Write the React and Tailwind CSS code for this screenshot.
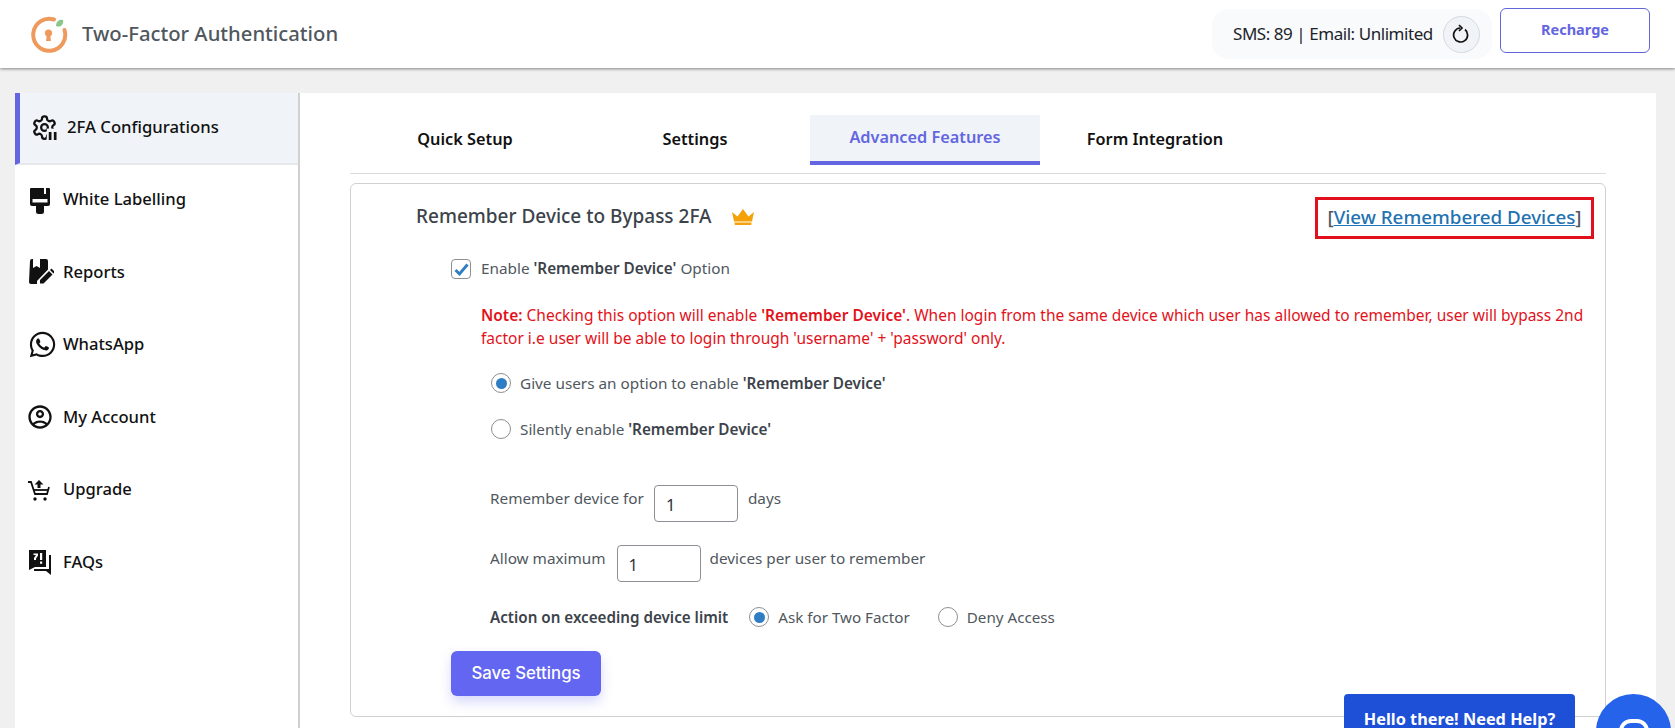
import { FaWhatsapp } from 'react-icons/fa';
import { MdOutlineAccountCircle } from 'react-icons/md';

const font = 'font-["Noto_Sans",sans-serif]';

function LogoIcon() {
    return (
        <svg width="38" height="38" viewBox="0 0 38 38" fill="none">
            <path d="M24 4.500A16 16 0 1 0 34.500 15" stroke="#ee9a5c" strokeWidth="4" strokeLinecap="round" />
            <circle cx="18.500" cy="18" r="3.600" fill="#ee9a5c" />
            <path d="M17 19h3l1 7h-5z" fill="#ee9a5c" />
            <path d="M26 11c0-4 3-7 7-6 1 4-2 8-7 6z" fill="#8cc68a" />
        </svg>
    );
}

function GearIcon() {
    return (
        <svg width="27" height="27" viewBox="0 0 24 24" fill="none" stroke="#111" strokeWidth="2">
            <path d="M12.220 2h-.44a2 2 0 0 0-2 2v.18a2 2 0 0 1-1 1.730l-.43.25a2 2 0 0 1-2 0l-.15-.08a2 2 0 0 0-2.730.73l-.22.38a2 2 0 0 0 .73 2.730l.15.1a2 2 0 0 1 1 1.720v.51a2 2 0 0 1-1 1.740l-.15.09a2 2 0 0 0-.73 2.730l.22.38a2 2 0 0 0 2.730.73l.15-.08a2 2 0 0 1 2 0l.43.25a2 2 0 0 1 1 1.730V20a2 2 0 0 0 2 2h.44a2 2 0 0 0 2-2v-.18a2 2 0 0 1 1-1.730l.43-.25a2 2 0 0 1 2 0l.15.08a2 2 0 0 0 2.730-.73l.22-.39a2 2 0 0 0-.73-2.730l-.15-.08a2 2 0 0 1-1-1.740v-.5a2 2 0 0 1 1-1.740l.15-.09a2 2 0 0 0 .73-2.730l-.22-.38a2 2 0 0 0-2.730-.73l-.15.08a2 2 0 0 1-2 0l-.43-.25a2 2 0 0 1-1-1.730V4a2 2 0 0 0-2-2z" />
            <circle cx="12" cy="12" r="3" />
            <rect x="14" y="13" width="10" height="11" fill="#f0f4f9" stroke="none" />
            <path d="M17 16v7M21.500 16v7" strokeWidth="2.400" />
        </svg>
    );
}

function BrushIcon() {
    return (
        <svg width="24" height="28" viewBox="0 0 24 28" fill="#111">
            <path d="M3 2h13v6h2V2h3a1 1 0 0 1 1 1v15a2 2 0 0 1-2 2h-4v5.500a2.500 2.500 0 0 1-2.500 2.500h-3A2.500 2.500 0 0 1 8 25.500V20H4a2 2 0 0 1-2-2V3a1 1 0 0 1 1-1zM4.500 13v3.500h15V13z" fillRule="evenodd" />
        </svg>
    );
}

function ReportIcon() {
    return (
        <svg width="26" height="26" viewBox="0 0 26 26" fill="#111">
            <path d="M2 2a2 2 0 0 1 2-2h1v9l3.500-2L12 9V0h6a2 2 0 0 1 2 2v8.500L9 22v3H3a2 2 0 0 1-2-2z" />
            <path d="M12 21l9-9 3.500 3.500-9 9H12zM22 11l1.500-1.500L27 13l-1.500 1.500z" />
        </svg>
    );
}

function CartIcon() {
    return (
        <svg width="24" height="24" viewBox="0 0 24 24" fill="none" stroke="#111" strokeWidth="1.800">
            <path d="M0 4h3l4 12h12l2-7" />
            <circle cx="7" cy="21" r="1.700" fill="#111" stroke="none" />
            <circle cx="17" cy="21" r="1.700" fill="#111" stroke="none" />
            <path d="M5 12h15" />
            <path d="M11 2l4.500 4.500h-3V10h-3V6.500h-3z" fill="#111" stroke="none" />
        </svg>
    );
}

function FaqIcon() {
    return (
        <svg width="24" height="25" viewBox="0 0 24 25" fill="#111">
            <path
                fillRule="evenodd"
                d="M1 0h17v17H7l-6 3zM5.500 3.500v1.500h2.500l-2 3v2h2V8.500l2-3V3.500zM12 3v7h2.200V3zM12 11.500v2.200h2.200v-2.200z"
            />
            <path d="M21 5h2v20l-5-4H6v-2h15z" />
        </svg>
    );
}

function CrownIcon() {
    return (
        <svg width="22" height="16" viewBox="0 0 22 16" fill="#f5a20a">
            <path d="M0 3l5.500 4.500L11 0l5.500 7.500L22 3l-2 9.500H2z" />
            <path d="M2.400 13.500h17.200l-.4 2.500H2.800z" />
        </svg>
    );
}

const navItems = [
    { label: 'White Labelling', icon: <BrushIcon /> },
    { label: 'Reports', icon: <ReportIcon /> },
    { label: 'WhatsApp', icon: <FaWhatsapp size={29} color="#111" /> },
    { label: 'My Account', icon: <span className="-ml-[2px]"><MdOutlineAccountCircle size={28} color="#111" /></span> },
    { label: 'Upgrade', icon: <CartIcon /> },
    { label: 'FAQs', icon: <FaqIcon /> },
];

const tabs = ['Quick Setup', 'Settings', 'Advanced Features', 'Form Integration'];

function Radio({ checked }) {
    return (
        <span className="flex h-5 w-5 shrink-0 items-center justify-center rounded-full border border-[#8c8f94] bg-white">
            {checked && <span className="h-[11px] w-[11px] rounded-full bg-[#2f7ec4]" />}
        </span>
    );
}

function NumberBox() {
    return (
        <div className="flex h-[37px] w-[84px] items-center rounded border border-[#8c8f94] bg-white pl-[11px] pt-[3px] text-[16.500px] text-[#2c3338]">
            1
        </div>
    );
}

export default function App() {
    return (
        <div className={`relative h-[728px] w-[1675px] overflow-hidden bg-[#f0f0f1] ${font}`}>
            {/* Header */}
            <header className="flex h-[68px] items-center justify-between bg-white pl-[30px] pr-[25px] shadow-[0_1px_3px_rgba(0,0,0,0.45)]">
                <div className="flex items-center gap-[14px]">
                    <LogoIcon />
                    <h1 className="pb-[2px] text-[20.250px] font-medium text-[#50575e]">Two-Factor Authentication</h1>
                </div>
                <div className="flex items-start gap-2">
                    <div className="flex h-[50px] w-[280px] items-center gap-[10px] rounded-2xl bg-[#f8fafc] pl-[21px]">
                        <span className="text-[17px] tracking-[-0.45px] text-[#1d2327]">SMS: 89 | Email: Unlimited</span>
                        <span className="flex h-[37px] w-[37px] items-center justify-center rounded-full border border-[#d5d9de] bg-[#f0f4f8]">
                            <svg width="18" height="20" viewBox="0 0 18 20" fill="none" stroke="#111" strokeWidth="1.700">
                                <path d="M13 5.500a7 7 0 1 1-5-1.500" />
                                <path d="M7 1l3 3-3 3" />
                            </svg>
                        </span>
                    </div>
                    <button className="-mt-[1px] h-[45px] w-[150px] rounded-md border border-[#6366d8] bg-white pb-[1px] text-[14.500px] font-bold text-[#6366e0]">
                        Recharge
                    </button>
                </div>
            </header>

            <div className="flex pl-[15px] pr-[19px] pt-[25px]">
                {/* Sidebar */}
                <aside className="h-[700px] w-[285px] shrink-0 border-r-2 border-[#d0d0d0] bg-white">
                    <div className="flex h-[72px] items-center gap-[9px] border-b-2 border-l-[5px] border-b-[#e6e8ec] border-l-[#6366e0] bg-[#f0f4f9] pb-[2px] pl-[11px]">
                        <GearIcon />
                        <span className="text-[16.700px] font-medium text-[#111]">2FA Configurations</span>
                    </div>
                    {navItems.map((item) => (
                        <div key={item.label} className="flex h-[72.500px] items-center pb-[3px] pl-[13px]">
                            <span className="flex w-[35px] shrink-0 justify-start">{item.icon}</span>
                            <span className="text-[16.600px] font-medium text-[#111]">{item.label}</span>
                        </div>
                    ))}
                </aside>

                {/* Main */}
                <main className="h-[700px] flex-1 bg-white px-[50px] pt-[22px]">
                    <div className="flex h-[59px] border-b border-[#dcdcde] pb-2">
                        {tabs.map((tab) => (
                            <div
                                key={tab}
                                className={`flex h-[50px] w-[230px] items-center justify-center pb-[2px] text-[16.300px] font-semibold ${
                                    tab === 'Advanced Features'
                                        ? 'border-b-4 border-[#6366e0] bg-[#f0f4f9] pb-0 text-[#6366e0]'
                                        : 'text-[#111]'
                                }`}
                            >
                                {tab}
                            </div>
                        ))}
                    </div>

                    {/* Card */}
                    <div className="mt-[9px] h-[534px] rounded-md border border-[#d0d0d0] pt-[13px] text-[15.300px] text-[#50575e]">
                        <div className="flex h-[42px] items-center justify-between pl-[65px] pr-[11px]">
                            <div className="flex items-center gap-[20px] pb-[3px]">
                                <h2 className="text-[19px] font-medium text-[#3c434a]">Remember Device to Bypass 2FA</h2>
                                <CrownIcon />
                            </div>
                            <div className="flex h-[42px] w-[279px] items-center justify-center border-[3px] border-[#e0101c] pb-[1px] text-[18.800px] font-medium text-[#50575e]">
                                [<a className="text-[#2271b1] underline">View Remembered Devices</a>]
                            </div>
                        </div>

                        <div className="mt-5 flex h-5 items-center pl-[100px]">
                            <span className="mr-[10px] flex h-5 w-5 items-center justify-center rounded border border-[#8c8f94]">
                                <svg width="15" height="13" viewBox="0 0 15 13" fill="none" stroke="#2f7ec4" strokeWidth="2.800">
                                    <path d="M1.500 7l4 4 8-9.500" />
                                </svg>
                            </span>
                            <span className="pb-[2px]">
                                Enable <b className="font-semibold text-[#3c434a]">'Remember Device'</b> Option
                            </span>
                        </div>

                        <p className="mt-[25px] pl-[130px] pr-5 text-[15.500px] leading-[23px] text-[#e2121b]">
                            <b className="font-semibold">Note:</b> Checking this option will enable{' '}
                            <b className="font-semibold">'Remember Device'</b>. When login from the same device which user has allowed to remember, user will bypass 2nd factor i.e user will be able to login through 'username' + 'password' only.
                        </p>

                        <div className="mt-[23px] flex h-5 items-center gap-[9px] pl-[140px]">
                            <Radio checked />
                            <span>
                                Give users an option to enable <b className="font-semibold text-[#3c434a]">'Remember Device'</b>
                            </span>
                        </div>
                        <div className="mt-[26px] flex h-5 items-center gap-[9px] pl-[140px]">
                            <Radio />
                            <span>
                                Silently enable <b className="font-semibold text-[#3c434a]">'Remember Device'</b>
                            </span>
                        </div>

                        <div className="mt-[46px] flex pl-[139px]">
                            <span className="mr-[10px] mt-[2px]">Remember device for</span>
                            <NumberBox />
                            <span className="ml-[10px] mt-[2px]">days</span>
                        </div>
                        <div className="mt-[23px] flex pl-[139px]">
                            <span className="mr-[11px] mt-[2px]">Allow maximum</span>
                            <NumberBox />
                            <span className="ml-[9px] mt-[2px]">devices per user to remember</span>
                        </div>

                        <div className="mt-[25px] flex h-5 items-center pl-[139px] text-[15.200px]">
                            <b className="mr-[21px] font-semibold text-[#3c434a]">Action on exceeding device limit</b>
                            <Radio checked />
                            <span className="ml-[9px] mr-7">Ask for Two Factor</span>
                            <Radio />
                            <span className="ml-[9px]">Deny Access</span>
                        </div>

                        <button className="ml-[100px] mt-[24px] h-[45px] w-[150px] rounded-md bg-[#6366f1] font-['Inter',sans-serif] text-[16.800px] font-medium text-white shadow-[0_6px_12px_rgba(99,102,241,0.25)]">
                            Save Settings
                        </button>
                    </div>
                </main>
            </div>

            {/* Chat widget */}
            <div className="absolute left-[1344px] top-[694px] h-[60px] w-[231px] rounded bg-[#1d4fd7] pt-[13px] text-center text-[16.300px] font-bold text-white">
                Hello there! Need Help?
            </div>
            <div className="absolute left-[1596px] top-[694px] h-[75px] w-[75px] rounded-full bg-[#2563eb]">
                <div className="mx-auto mt-[25px] h-[24px] w-[30px] rounded-[12px] border-[4px] border-white" />
            </div>
        </div>
    );
}
